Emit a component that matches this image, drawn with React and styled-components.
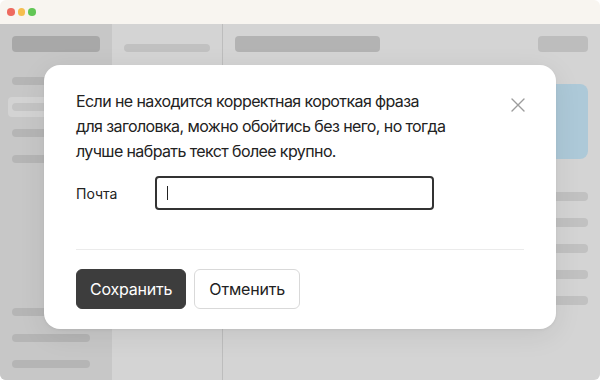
import React from 'react';
import styled, { createGlobalStyle } from 'styled-components';

const GlobalStyle = createGlobalStyle`
  html, body {
    margin: 0;
    padding: 0;
    background: #ffffff;
  }
  body {
    font-family: Inter, "Noto Sans", "Liberation Sans", sans-serif;
    -webkit-font-smoothing: antialiased;
  }
`;

const lights = ['#ee6a5f', '#f5be4f', '#62c655'];

const App = () => (
  <>
    <GlobalStyle />
    <Window>
      <TitleBar>
        {lights.map((c) => (
          <Light key={c} color={c} />
        ))}
      </TitleBar>
      <Body>
        <Sidebar>
          <Pill tall width={88} color="#a8a8a8" />
          <NavList>
            <NavRow>
              <Pill width={78} color="#b5b5b5" />
            </NavRow>
            <NavRow active>
              <Pill width={78} color="#c4c4c4" />
            </NavRow>
            <NavRow>
              <Pill width={78} color="#b5b5b5" />
            </NavRow>
            <NavRow>
              <Pill width={78} color="#b5b5b5" />
            </NavRow>
          </NavList>
          <NavList bottom>
            <NavRow>
              <Pill width={78} color="#b5b5b5" />
            </NavRow>
            <NavRow>
              <Pill width={78} color="#b5b5b5" />
            </NavRow>
            <NavRow>
              <Pill width={78} color="#b5b5b5" />
            </NavRow>
          </NavList>
        </Sidebar>
        <ListColumn>
          <Pill width={86} color="#c1c1c1" />
        </ListColumn>
        <Main>
          <MainHeader>
            <Pill tall width={145} color="#b3b3b3" />
            <Pill tall width={50} color="#bdbdbd" />
          </MainHeader>
          <Card />
          <Rows>
            {[0, 1, 2, 3, 4].map((i) => (
              <Pill key={i} color="#c1c1c1" />
            ))}
          </Rows>
        </Main>

        <Overlay>
          <Modal>
            <ModalHead>
              <Title>
                Если не находится корректная короткая фраза
                <br />
                для заголовка, можно обойтись без него, но тогда
                <br />
                лучше набрать текст более крупно.
              </Title>
              <CloseButton aria-label="Закрыть">
                <svg width="14" height="14" viewBox="0 0 14 14">
                  <path
                    d="M1 1L13 13M13 1L1 13"
                    stroke="#9c9c9c"
                    strokeWidth="1.4"
                    strokeLinecap="round"
                  />
                </svg>
              </CloseButton>
            </ModalHead>
            <Field>
              <Label>Почта</Label>
              <InputBox>
                <Caret />
              </InputBox>
            </Field>
            <Divider />
            <Actions>
              <Button primary>Сохранить</Button>
              <Button>Отменить</Button>
            </Actions>
          </Modal>
        </Overlay>
      </Body>
    </Window>
  </>
);

export default App;

const Window = styled.div`
  width: 600px;
  height: 380px;
  display: flex;
  flex-direction: column;
  border-radius: 6px;
  overflow: hidden;
`;

const TitleBar = styled.div`
  height: 24px;
  flex-shrink: 0;
  background: #f8f5f0;
  display: flex;
  align-items: center;
  gap: 3px;
  padding-left: 7px;
`;

const Light = styled.span`
  width: 7.5px;
  height: 7.5px;
  border-radius: 50%;
  background: ${(p) => p.color};
`;

const Body = styled.div`
  flex: 1;
  display: flex;
  position: relative;
  background: #d4d4d4;
`;

const Sidebar = styled.div`
  width: 112px;
  flex-shrink: 0;
  background: #c7c7c7;
  display: flex;
  flex-direction: column;
  padding: 12px 0 6px 12px;
  box-sizing: border-box;
`;

const NavList = styled.div`
  display: flex;
  flex-direction: column;
  gap: 6px;
  margin-top: ${(p) => (p.bottom ? 'auto' : '19px')};
  margin-left: -4px;
`;

const NavRow = styled.div`
  height: 20px;
  width: 96px;
  display: flex;
  align-items: center;
  padding-left: 4px;
  box-sizing: border-box;
  border-radius: 4px;
  background: ${(p) => (p.active ? '#d3d3d3' : 'transparent')};
`;

const Pill = styled.div`
  height: ${(p) => (p.tall ? '16px' : '8px')};
  width: ${(p) => (p.width ? `${p.width}px` : '100%')};
  border-radius: 4px;
  background: ${(p) => p.color};
  flex-shrink: 0;
`;

const ListColumn = styled.div`
  width: 111px;
  flex-shrink: 0;
  border-right: 1px solid #bdbdbd;
  padding: 20px 0 0 12px;
  box-sizing: border-box;
`;

const Main = styled.div`
  flex: 1;
  padding: 12px 12px 0;
  display: flex;
  flex-direction: column;
`;

const MainHeader = styled.div`
  display: flex;
  justify-content: space-between;
`;

const Card = styled.div`
  margin-top: 32px;
  height: 75px;
  border-radius: 8px;
  background: #adc9d8;
`;

const Rows = styled.div`
  margin-top: 33px;
  display: flex;
  flex-direction: column;
  gap: 17px;

  & > div {
    height: 9px;
  }
`;

const Overlay = styled.div`
  position: absolute;
  inset: 0;
  display: flex;
  justify-content: center;
  align-items: flex-start;
  padding-top: 41px;
`;

const Modal = styled.div`
  width: 512px;
  box-sizing: border-box;
  background: #ffffff;
  border-radius: 16px;
  padding: 24px 32px 20px;
  box-shadow: 0 6px 28px rgba(0, 0, 0, 0.08), 0 1px 3px rgba(0, 0, 0, 0.05);
  display: flex;
  flex-direction: column;
`;

const ModalHead = styled.div`
  display: flex;
  justify-content: space-between;
  align-items: flex-start;
`;

const Title = styled.p`
  margin: 0;
  font-size: 16px;
  line-height: 25px;
  color: #222222;
  letter-spacing: -0.6px;
`;

const CloseButton = styled.button`
  border: 0;
  background: none;
  padding: 0;
  margin: 9px -1px 0 0;
  width: 14px;
  height: 14px;
  display: flex;
  cursor: pointer;
`;

const Field = styled.div`
  display: flex;
  align-items: center;
  margin-top: 12px;
`;

const Label = styled.span`
  width: 79px;
  font-size: 14px;
  color: #222222;
`;

const InputBox = styled.div`
  width: 279px;
  height: 34px;
  box-sizing: border-box;
  border: 2px solid #333333;
  border-radius: 4px;
  display: flex;
  align-items: center;
  padding-left: 10px;
`;

const Caret = styled.span`
  width: 1px;
  height: 14px;
  background: #222222;
`;

const Divider = styled.hr`
  margin: 39px 0 0;
  border: 0;
  height: 1px;
  background: #ebebeb;
`;

const Actions = styled.div`
  display: flex;
  gap: 8px;
  margin-top: 19px;
`;

const Button = styled.button`
  height: 40px;
  padding: 0 ${(p) => (p.primary ? '13px' : '14px')};
  border-radius: 6px;
  font-family: inherit;
  font-size: 16px;
  letter-spacing: -0.2px;
  cursor: pointer;
  border: 1px solid ${(p) => (p.primary ? '#3d3d3d' : '#d9d9d9')};
  background: ${(p) => (p.primary ? '#3d3d3d' : '#ffffff')};
  color: ${(p) => (p.primary ? '#ffffff' : '#222222')};
`;
